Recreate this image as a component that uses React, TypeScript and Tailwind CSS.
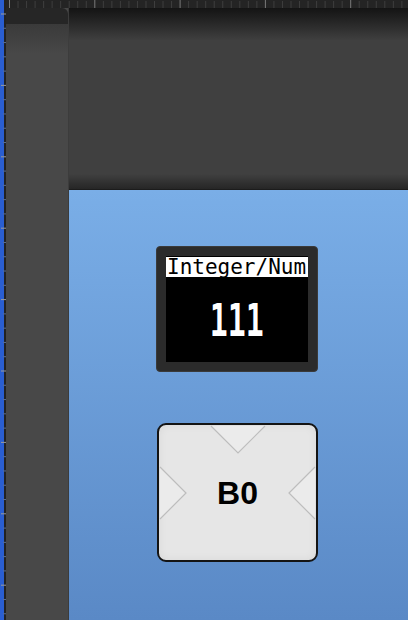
import React from 'react';

const TOP_TICKS = Array.from({ length: 48 }, (_, i) => i);
const SIDE_TICKS = Array.from({ length: 44 }, (_, i) => i);

function TopRuler() {
  return (
    <div className="relative h-[8px] w-full bg-[#242424]">
      <svg className="absolute inset-0" width="402" height="8">
        {TOP_TICKS.map((i) => {
          const x = 3.5 + i * 8.53;
          const major = i % 10 === 0;
          return (
            <line
              key={i}
              x1={x}
              x2={x}
              y1={major ? 0 : 1}
              y2={8}
              stroke={major ? '#7a7a7a' : '#3e3e3e'}
              strokeWidth={1}
            />
          );
        })}
      </svg>
    </div>
  );
}

function SideRuler() {
  return (
    <div className="relative flex h-full w-[6px]">
      <div className="w-[4px] bg-[#2a5ed1]" />
      <div className="w-[2px] bg-[#222222]" />
      <svg className="absolute inset-0" width="6" height="620">
        {SIDE_TICKS.map((i) => {
          const y = 14 + i * 14.28;
          const major = i % 5 === 0;
          return (
            <line
              key={i}
              x1={major ? 1 : 3}
              x2={6}
              y1={y}
              y2={y}
              stroke={major ? '#9a9a9a' : '#5a6f96'}
              strokeWidth={1}
            />
          );
        })}
      </svg>
    </div>
  );
}

function NumberDisplay() {
  return (
    <div className="w-[162px] h-[126px] rounded-[4px] bg-[#2b2b2b] border border-[#3a3a3a] p-[9px]">
      <div className="flex h-full flex-col bg-black">
        <div className="mt-[1px] h-[20px] bg-white pl-[1px] font-['DejaVu_Sans_Mono',monospace] text-[21px] leading-[20px] text-black whitespace-nowrap">
          Integer/Num
        </div>
        <div className="flex flex-1 items-center justify-center pt-[3px]">
          <span className="inline-block scale-x-[0.68] font-['DejaVu_Sans_Mono',monospace] text-[44px] font-bold leading-none text-white">
            111
          </span>
        </div>
      </div>
    </div>
  );
}

function PadButton() {
  return (
    <div className="relative flex w-[161px] h-[139px] items-center justify-center rounded-[9px] border-2 border-[#141414] bg-[#e6e6e6] shadow-[inset_0_0_10px_rgba(0,0,0,0.06)]">
      <svg className="absolute inset-0" width="157" height="135">
        <g fill="#ebebeb" stroke="#bdbdbd" strokeWidth="1.2">
          <polyline points="52,1 79,28 106,1" />
          <polyline points="1,42 27,68 1,94" />
          <polyline points="156,42 130,68 156,94" />
        </g>
      </svg>
      <span className="relative font-['Liberation_Sans',Arial,sans-serif] text-[32px] font-bold text-black">
        B0
      </span>
    </div>
  );
}

export default function App() {
  return (
    <div className="flex h-[620px] w-[408px] overflow-hidden bg-[#484848]">
      <SideRuler />
      <div className="flex flex-1 flex-col">
        <TopRuler />
        <div className="flex flex-1">
          {/* left panel */}
          <div className="flex w-[63px] flex-col border-r border-[#3c3c3c]">
            <div className="h-[16px] rounded-tr-[6px] bg-[#262626]" />
            <div className="h-[30px] bg-gradient-to-b from-[#3a3a3a] to-[#484848]" />
            <div className="flex-1 bg-[#484848]" />
          </div>

          <div className="flex flex-1 flex-col">
            {/* header */}
            <div className="flex h-[182px] flex-col">
              <div className="h-[32px] bg-gradient-to-b from-[#141414] to-[#3f3f3f]" />
              <div className="flex-1 bg-[#404040]" />
              <div className="h-[15px] bg-gradient-to-b from-[#404040] to-[#262626]" />
              <div className="h-[1px] bg-[#1c1c1c]" />
            </div>

            {/* canvas */}
            <div className="flex flex-1 flex-col gap-[51px] bg-gradient-to-b from-[#7aaee7] to-[#5a89c6] pl-[87px] pt-[56px]">
              <NumberDisplay />
              <div className="pl-[1px]">
                <PadButton />
              </div>
            </div>
          </div>
        </div>
      </div>
    </div>
  );
}
